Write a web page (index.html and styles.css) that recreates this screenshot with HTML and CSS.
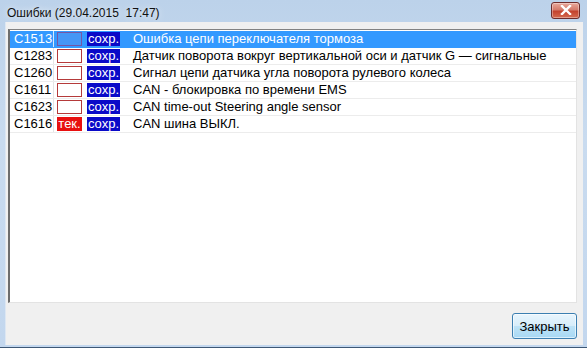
FILE: index.html
```html
<!DOCTYPE html>
<html lang="ru">

<head>
    <meta charset="UTF-8">
    <title>Ошибки</title>
    <link rel="stylesheet" href="styles.css">
</head>

<body>
    <div class="window">
        <div class="titlebar">
            <span class="title">Ошибки (29.04.2015&nbsp; 17:47)</span>
            <div class="close">
                <svg width="12" height="10" viewBox="0 0 12 10">
                    <path d="M2 1 L10 9 M10 1 L2 9" stroke="#ffffff" stroke-width="2.4" stroke-linecap="square" fill="none"/>
                </svg>
            </div>
        </div>
        <div class="client">
            <div class="list">
                <div class="row selected">
                    <span class="code">C1513</span>
                    <span class="flag empty"></span>
                    <span class="flag saved">сохр.</span>
                    <span class="desc">Ошибка цепи переключателя тормоза</span>
                </div>
                <div class="row">
                    <span class="code">C1283</span>
                    <span class="flag empty"></span>
                    <span class="flag saved">сохр.</span>
                    <span class="desc">Датчик поворота вокруг вертикальной оси и датчик G — сигнальные</span>
                </div>
                <div class="row">
                    <span class="code">C1260</span>
                    <span class="flag empty"></span>
                    <span class="flag saved">сохр.</span>
                    <span class="desc">Сигнал цепи датчика угла поворота рулевого колеса</span>
                </div>
                <div class="row">
                    <span class="code">C1611</span>
                    <span class="flag empty"></span>
                    <span class="flag saved">сохр.</span>
                    <span class="desc">CAN - блокировка по времени EMS</span>
                </div>
                <div class="row">
                    <span class="code">C1623</span>
                    <span class="flag empty"></span>
                    <span class="flag saved">сохр.</span>
                    <span class="desc">CAN time-out Steering angle sensor</span>
                </div>
                <div class="row">
                    <span class="code">C1616</span>
                    <span class="flag current">тек.</span>
                    <span class="flag saved">сохр.</span>
                    <span class="desc">CAN шина ВЫКЛ.</span>
                </div>
            </div>
            <div class="footer">
                <button class="btn">Закрыть</button>
            </div>
        </div>
    </div>
</body>

</html>
```

FILE: styles.css
```css
body {
    margin: 0;
    font-family: "Liberation Sans", Arial, sans-serif;
}

.window {
    width: 587px;
    height: 348px;
    box-sizing: border-box;
    display: flex;
    flex-direction: column;
    background: linear-gradient(to bottom, #bcd2ea, #c9dbef 40%, #c3d7ee);
    border-bottom: 1px solid #3d5775;
}

/* заголовок окна */
.titlebar {
    height: 22px;
    display: flex;
    align-items: center;
    justify-content: space-between;
    padding: 0 7px 0 7px;
}

.title {
    font-size: 12px;
    color: #111;
    margin-top: 4px;
    text-shadow: 0 0 6px rgba(255, 255, 255, 0.9);
}

.close {
    width: 27px;
    height: 15px;
    margin-top: -2px;
    border: 1px solid #6e2c2c;
    border-radius: 3px;
    background: linear-gradient(to bottom, #e9a99c, #d47a6a 45%, #c3422e 55%, #d56a4f);
    display: flex;
    align-items: center;
    justify-content: center;
    box-shadow: inset 0 0 0 1px rgba(255, 255, 255, 0.35);
}

/* клиентская часть */
.client {
    flex: 1;
    margin: 0 4px 2px 5px;
    background-color: #f0f0f0;
    display: flex;
    flex-direction: column;
    padding: 7px 6px 6px 2px;
    border-left: 1px solid #dde7f3;
}

.list {
    flex: 1;
    background-color: #fff;
    border-top: 1px solid #828282;
    border-left: 2px solid #6d6d6d;
    border-right: 1px solid #e3e3e3;
    border-bottom: 1px solid #e3e3e3;
    padding-top: 1px;
    font-size: 13px;
}

.row {
    height: 17px;
    box-sizing: border-box;
    display: flex;
    align-items: center;
    border-bottom: 1px solid #ececec;
    color: #000;
    white-space: nowrap;
}

.row.selected {
    background-color: #3399ff;
    color: #fff;
    border-bottom-color: #3399ff;
}

.code {
    width: 39px;
    padding-left: 4px;
    height: 100%;
    line-height: 16px;
    border-right: 1px solid #e4e4e4;
}

.selected .code {
    border-right-color: #d6e8fb;
}

.flag {
    height: 14px;
    box-sizing: border-box;
    line-height: 14px;
    text-align: center;
    color: #fff;
    margin-left: 3px;
}

.flag.empty {
    width: 25px;
    border: 1px solid #b53a3a;
    background-color: #fff;
}

.selected .flag.empty {
    border-color: #7456a6;
    background-color: #4596f6;
}

.flag.current {
    width: 25px;
    background-color: #e81010;
}

.flag.saved {
    width: 33px;
    margin-left: 5px;
    background-color: #0a0ac8;
}

.desc {
    margin-left: 13px;
    line-height: 16px;
}

/* нижняя панель с кнопкой */
.footer {
    display: flex;
    justify-content: flex-end;
    padding-top: 10px;
}

.btn {
    width: 65px;
    height: 26px;
    font-family: "Liberation Sans", Arial, sans-serif;
    font-size: 13px;
    color: #000;
    border: 1px solid #3c7fb1;
    border-radius: 3px;
    background: linear-gradient(to bottom, #e9f5fd, #d6edfa 50%, #bee3f7 51%, #a7d8f4);
    box-shadow: inset 0 0 0 1px rgba(255, 255, 255, 0.6);
    padding: 0;
}
```
